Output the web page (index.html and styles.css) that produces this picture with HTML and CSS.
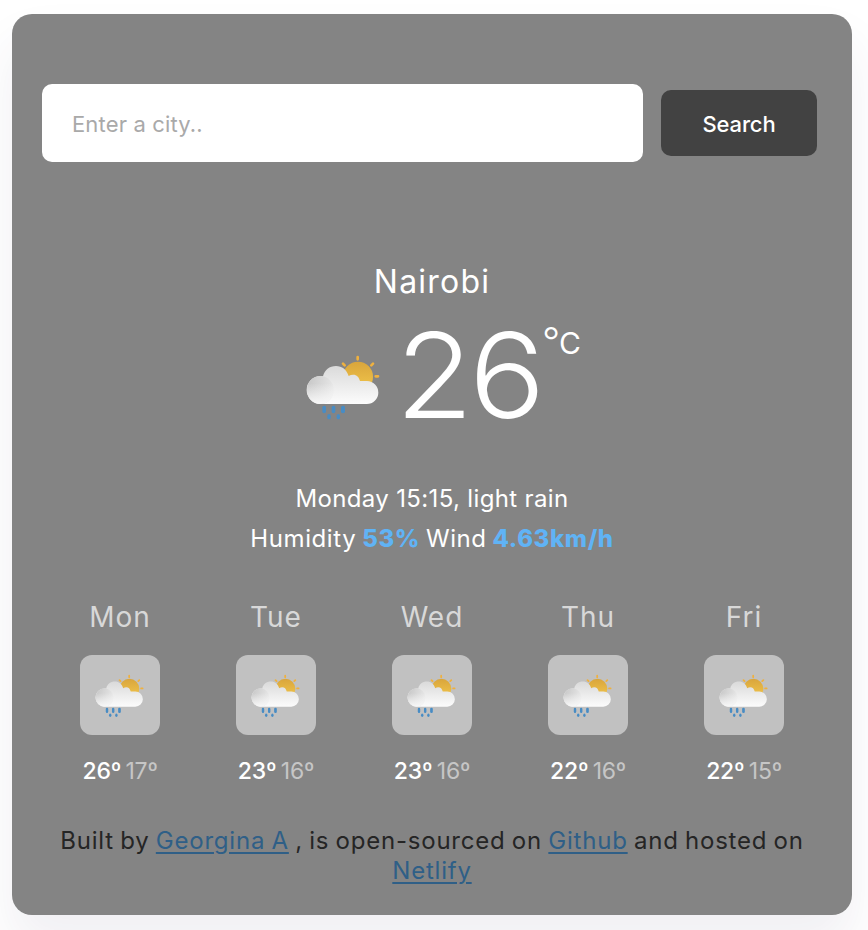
FILE: index.html
```html
<!DOCTYPE html>
<html lang="en">
<head>
<meta charset="utf-8">
<title>Weather</title>
<link rel="stylesheet" href="styles.css">
</head>
<body>
<svg width="0" height="0" class="defs" aria-hidden="true">
  <defs>
    <linearGradient id="sun" x1="0" y1="0" x2="0" y2="1"><stop offset="0" stop-color="#d9a53c"/><stop offset="1" stop-color="#f3c84c"/></linearGradient>
    <linearGradient id="cloud" gradientUnits="userSpaceOnUse" x1="0" y1="48" x2="0" y2="162"><stop offset="0" stop-color="#dadada"/><stop offset="1" stop-color="#fcfcfc"/></linearGradient>
    <linearGradient id="puff" x1="0" y1=".4" x2="1" y2=".65"><stop offset="0" stop-color="#c9c9c9"/><stop offset="1" stop-color="#e9e9e9"/></linearGradient>
    <linearGradient id="fade" gradientUnits="userSpaceOnUse" x1="0" y1="100" x2="0" y2="162"><stop offset="0" stop-color="#f8f8f8" stop-opacity="0"/><stop offset="1" stop-color="#f8f8f8"/></linearGradient>
    <symbol id="rain" viewBox="0 0 270 240">
      <g stroke="#efb13f" stroke-width="8" stroke-linecap="round">
        <path d="M173 21V28M129 41L134 46M219 41L214 46M227 79H234"/>
      </g>
      <circle cx="174" cy="80" r="45" fill="url(#sun)"/>
      <path d="M62 162A41.500 41.500 0 0 1 62 78Q65 78 69 79C74 59 88 48 108 48C126 48 140 59 146 78Q152 74 160 74C170 74 177 81 180 93H201A34 34 0 0 1 200 162Z" fill="url(#cloud)"/>
      <ellipse cx="61" cy="120" rx="40" ry="42" fill="url(#puff)"/>
      <ellipse cx="61" cy="120" rx="40" ry="42" fill="url(#fade)"/>
      <g fill="#488cc4">
        <rect x="67" y="167" width="11" height="23" rx="5.500"/><rect x="95" y="167" width="11" height="23" rx="5.500"/><rect x="123" y="167" width="12" height="23" rx="5.500"/>
        <ellipse cx="87" cy="200" rx="5.500" ry="8"/><ellipse cx="115" cy="200" rx="5.500" ry="8"/>
      </g>
    </symbol>
  </defs>
</svg>
<main class="card">
  <form class="search">
    <input class="search-input" type="text" placeholder="Enter a city..">
    <button class="search-button" type="button">Search</button>
  </form>
  <h1 class="city">Nairobi</h1>
  <div class="current">
    <svg class="current-icon"><use href="#rain"/></svg>
    <span class="temperature">26</span><span class="unit"><span class="degree">°</span>C</span>
  </div>
  <p class="details"><span class="when">Monday 15:15, light rain</span><br><span class="stats">Humidity <strong>53%</strong> Wind <strong>4.63km/h</strong></span></p>
  <section class="forecast">
    <div class="day"><div class="name">Mon</div><div class="tile"><svg><use href="#rain"/></svg></div><div class="range"><b>26º</b> <span>17º</span></div></div>
    <div class="day"><div class="name">Tue</div><div class="tile"><svg><use href="#rain"/></svg></div><div class="range"><b>23º</b> <span>16º</span></div></div>
    <div class="day"><div class="name">Wed</div><div class="tile"><svg><use href="#rain"/></svg></div><div class="range"><b>23º</b> <span>16º</span></div></div>
    <div class="day"><div class="name">Thu</div><div class="tile"><svg><use href="#rain"/></svg></div><div class="range"><b>22º</b> <span>16º</span></div></div>
    <div class="day"><div class="name">Fri</div><div class="tile"><svg><use href="#rain"/></svg></div><div class="range"><b>22º</b> <span>15º</span></div></div>
  </section>
  <footer class="credits">Built by <a href="#">Georgina A</a> , is open-sourced on <a href="#">Github</a> and hosted on<br><a href="#">Netlify</a></footer>
</main>
</body>
</html>
```
FILE: styles.css
```css
* { box-sizing: border-box; }
html { overflow: hidden; }
body { margin: 0; padding: 14px 16px 15px 12px; background: #fff; font-family: Inter, "Liberation Sans", sans-serif; }
.defs { display: block; height: 0; }
.card { height: 901px; padding: 70px 30px 0; border-radius: 20px; background: #848484; color: #fff; box-shadow: 0 30px 50px rgba(65, 50, 100, .08); }
.search { display: flex; align-items: center; gap: 18px; }
.search-input { width: 601px; height: 78px; padding: 2px 30px 0; border: 0; border-radius: 10px; background: #fff; font: 400 22px Inter, sans-serif; letter-spacing: .15px; outline: 0; }
.search-input::placeholder { color: #a9a9a9; opacity: 1; }
.search-button { width: 156px; height: 66px; padding: 2px 0 0; border: 0; border-radius: 10px; background: #424242; color: #fff; font: 500 22px Inter, sans-serif; letter-spacing: -.15px; }
.city { margin: 100px 0 0; font-size: 32px; line-height: 40px; font-weight: 400; text-align: center; letter-spacing: 1.2px; }
.current { display: flex; height: 140px; margin-top: 8px; padding-left: 258px; }
.current-icon { flex: none; width: 90px; height: 80px; margin-top: 40px; }
.temperature { width: 141px; margin-right: 11px; padding-left: 5px; font-size: 118px; font-weight: 300; line-height: 130px; letter-spacing: -4px; transform: scaleX(1.075); transform-origin: 0 0; }
.unit { display: flex; padding-top: 9px; font-size: 30px; line-height: 48px; }
.degree { width: 17px; font-size: 40px; font-weight: 300; line-height: 45px; }
.details { margin: 29px 0 0; font-size: 24px; line-height: 40px; text-align: center; }
.when { letter-spacing: .35px; }
.stats { letter-spacing: .6px; word-spacing: -1.5px; }
.details strong { color: #60b3f5; font-weight: 800; }
.forecast { display: grid; grid-template-columns: repeat(5, 156px); margin-top: 38px; }
.day { text-align: center; }
.name { font-size: 28px; line-height: 40px; letter-spacing: 1px; color: #d8d8d8; }
.tile { width: 80px; height: 80px; margin: 18px auto 0; padding: 15.5px 0 0 11.4px; border-radius: 12px; background: #c1c1c1; }
.tile svg { display: block; width: 59.6px; height: 53px; }
.range { margin-top: 21px; font-size: 23px; line-height: 30px; color: #c6c6c6; letter-spacing: -.2px; word-spacing: -2px; }
.range b { color: #fff; font-weight: 500; }
.credits { margin-top: 40px; font-size: 24px; line-height: 30px; color: #252525; text-align: center; white-space: nowrap; letter-spacing: .78px; word-spacing: -1.2px; }
.credits a { color: #2f5f87; text-decoration-thickness: 2px; text-underline-offset: 3px; }
```
